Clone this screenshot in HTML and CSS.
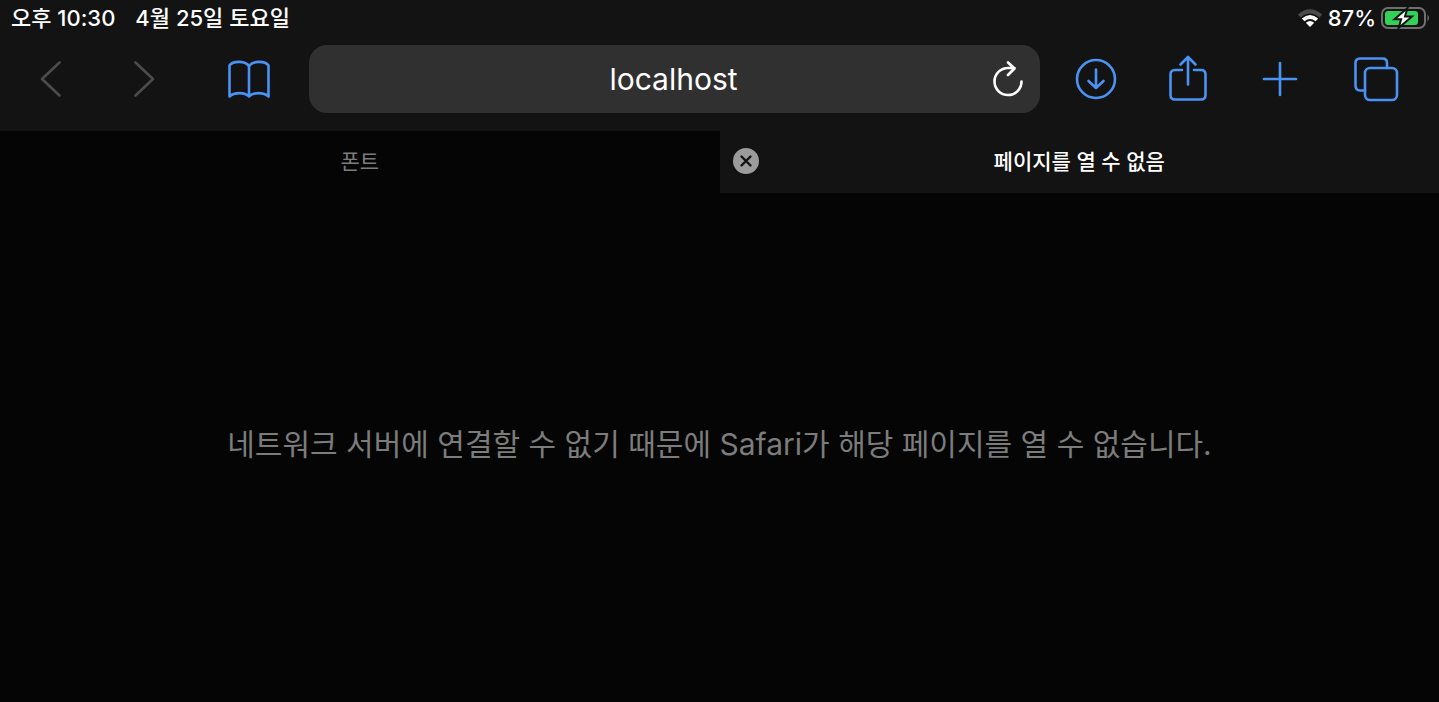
FILE: index.html
```
<!DOCTYPE html>
<html lang="ko">
<head>
    <meta charset="UTF-8">
    <meta name="viewport" content="width=device-width, initial-scale=1.0">
    <title>페이지를 열 수 없음</title>
    <link rel="stylesheet" href="styles.css">
</head>
<body>

    <header class="browser-bar">
        <!-- Status bar -->
        <div class="status-bar">
            <div class="status-left">
                <span>오후 10:30</span>
                <span>4월 25일 토요일</span>
            </div>
            <div class="status-right">
                <svg class="wifi" width="26" height="20" viewBox="0 0 26 20">
                    <path d="M0.8 6.6 Q13 -4.2 25.2 6.6 L22.4 9.4 Q13 1.4 3.6 9.4 Z" fill="#4b4b4b"/>
                    <path d="M4.8 10.6 Q13 3.6 21.2 10.6 L18.5 13.3 Q13 8.8 7.5 13.3 Z" fill="#fff"/>
                    <path d="M8.8 14.7 Q13 11.4 17.2 14.7 L13 19 Z" fill="#fff"/>
                </svg>
                <span>87%</span>
                <svg class="battery" width="50" height="24" viewBox="0 0 50 24">
                    <rect x="1" y="2" width="43" height="20" rx="6" fill="none" stroke="#6f6f6f" stroke-width="2"/>
                    <path d="M46.5 8.5 Q49.5 12 46.5 15.5 Z" fill="#6f6f6f"/>
                    <rect x="4" y="5" width="33" height="14" rx="3" fill="#32d158"/>
                    <path d="M26.5 2 L13.5 13.2 H20.2 L17.5 22 L31 10.4 H24 Z" fill="#fff" stroke="#131313" stroke-width="2"/>
                </svg>
            </div>
        </div>

        <!-- Toolbar -->
        <nav class="toolbar">
            <button class="tool-btn nav-btn" aria-label="뒤로" disabled>
                <svg width="24" height="40" viewBox="0 0 24 40"><path d="M20.5 3.5 L3 20 L20.5 36.5"/></svg>
            </button>
            <button class="tool-btn nav-btn" aria-label="앞으로" disabled>
                <svg width="24" height="40" viewBox="0 0 24 40"><path d="M2.5 3.5 L20 20 L2.5 36.5"/></svg>
            </button>
            <button class="tool-btn bookmark-btn" aria-label="책갈피">
                <svg width="44" height="40" viewBox="0 0 44 40">
                    <path d="M22 7.5 C19 1.500 6 1.500 2.500 6.500 V37.500 C7 33 18 33 22 37.500 C26 33 37 33 41.500 37.500 V6.500 C38 1.500 25 1.500 22 7.500 Z M22 7.500 V37"/>
                </svg>
            </button>

            <form class="address-bar">
                <input type="text" value="localhost" aria-label="주소">
                <button type="button" class="reload-btn" aria-label="새로 고침">
                    <svg width="36" height="40" viewBox="0 0 36 40">
                        <path d="M31.500 22.500 A13.500 13.500 0 1 1 18 9 H24.500 M18 3.500 L24.500 9.500 L18 16"/>
                    </svg>
                </button>
            </form>

            <button class="tool-btn" aria-label="다운로드">
                <svg width="44" height="44" viewBox="0 0 44 44">
                    <circle cx="22" cy="22" r="19"/>
                    <path d="M22 12.5 V31 M14.5 24 L22 31 L29.5 24"/>
                </svg>
            </button>
            <button class="tool-btn" aria-label="공유">
                <svg width="44" height="50" viewBox="0 0 44 50">
                    <path d="M16 16 H9 Q4.500 16 4.500 20.500 V41 Q4.500 45.500 9 45.500 H35 Q39.500 45.500 39.500 41 V20.500 Q39.500 16 35 16 H28 M22 30.500 V3 M14.500 10.500 L22 3 L29.500 10.500"/>
                </svg>
            </button>
            <button class="tool-btn" aria-label="새로운 탭">
                <svg width="40" height="40" viewBox="0 0 40 40"><path d="M20 4 V36 M4 20 H36"/></svg>
            </button>
            <button class="tool-btn tabs-btn" aria-label="탭 보기">
                <svg width="46" height="46" viewBox="0 0 46 46">
                    <path d="M12 34.500 H7 Q2.500 34.500 2.500 29.500 V7 Q2.500 2.500 7 2.500 H29.500 Q34 2.500 34 7 V12"/>
                    <rect x="12" y="12" width="32" height="32" rx="5"/>
                </svg>
            </button>
        </nav>
    </header>

    <!-- Tabs -->
    <div class="tab-bar">
        <div class="tab">
            <a href="#font">폰트</a>
        </div>
        <div class="tab active">
            <button class="close-btn" aria-label="탭 닫기">
                <svg width="26" height="26" viewBox="0 0 26 26">
                    <circle cx="13" cy="13" r="13" fill="#9b9b9b"/>
                    <path d="M8.500 8.500 L17.500 17.500 M17.500 8.500 L8.500 17.500" stroke="#131313" stroke-width="2.400" stroke-linecap="round"/>
                </svg>
            </button>
            <a href="#error">페이지를 열 수 없음</a>
        </div>
    </div>

    <!-- Page content -->
    <main class="error-page">
        <p>네트워크 서버에 연결할 수 없기 때문에 Safari가 해당 페이지를 열 수 없습니다.</p>
    </main>

</body>
</html>
```
FILE: styles.css
```
/* Root variables for colors */
:root {
    --bar-bg: #131313;
    --page-bg: #050505;
    --field-bg: #303030;
    --accent: #4a93f5;
    --muted: #7c7c7c;
}

* {
    margin: 0;
    padding: 0;
    box-sizing: border-box;
}

body {
    min-height: 100vh;
    display: flex;
    flex-direction: column;
    background: var(--page-bg);
    color: #fff;
    font-family: Inter, "Noto Sans CJK KR", sans-serif;
}

button {
    border: none;
    background: none;
    cursor: pointer;
}

svg {
    display: block;
}

.browser-bar {
    background: var(--bar-bg);
}

/* Status bar */
.status-bar {
    height: 36px;
    padding: 0 8px 0 11px;
    display: flex;
    justify-content: space-between;
    align-items: center;
    font-size: 22px;
    line-height: 36px;
    font-weight: 500;
}

.status-left {
    display: flex;
    gap: 20px;
}

.status-right {
    display: flex;
    align-items: center;
    gap: 5px;
}

/* Toolbar */
.toolbar {
    height: 95px;
    padding: 0 13px 10px 4px;
    display: flex;
    align-items: center;
}

.tool-btn {
    width: 92px;
    height: 68px;
    flex-shrink: 0;
    display: flex;
    justify-content: center;
    align-items: center;
}

.tool-btn svg {
    fill: none;
    stroke: var(--accent);
    stroke-width: 2.6;
    stroke-linecap: round;
    stroke-linejoin: round;
}

.nav-btn {
    width: 94px;
}

.nav-btn svg {
    stroke: #4c4c4c;
}

.bookmark-btn {
    width: 114px;
}

.tabs-btn {
    width: 100px;
}

/* Address bar */
.address-bar {
    flex: 1;
    min-width: 0;
    height: 68px;
    margin: 0 10px 0 3px;
    display: flex;
    background: var(--field-bg);
    border-radius: 18px;
}

.address-bar input {
    flex: 1;
    min-width: 0;
    padding-left: 62px;
    border: none;
    outline: none;
    background: none;
    color: #fff;
    font-family: inherit;
    font-size: 30px;
    text-align: center;
}

.reload-btn {
    width: 64px;
    display: flex;
    justify-content: center;
    align-items: center;
}

.reload-btn svg {
    fill: none;
    stroke: #fff;
    stroke-width: 2.6;
    stroke-linecap: round;
    stroke-linejoin: round;
}

/* Tabs */
.tab-bar {
    display: flex;
}

.tab {
    flex: 1;
    height: 62px;
    position: relative;
    display: flex;
    justify-content: center;
    align-items: center;
    font-size: 21px;
    line-height: 30px;
}

.tab a {
    color: var(--muted);
    text-decoration: none;
}

.tab.active {
    background: var(--bar-bg);
}

.tab.active a {
    color: #fff;
    font-weight: 500;
}

.close-btn {
    position: absolute;
    left: 13px;
    top: 17px;
}

/* Error message */
.error-page {
    flex: 1;
    padding: 0 20px 12px;
    display: flex;
    justify-content: center;
    align-items: center;
    color: var(--muted);
    font-size: 30px;
    font-weight: 400;
    text-align: center;
}
```
